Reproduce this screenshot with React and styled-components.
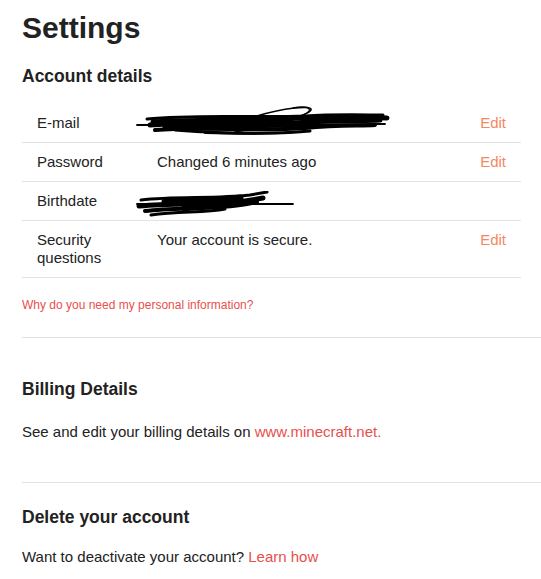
import styled, { createGlobalStyle } from 'styled-components';

const GlobalStyle = createGlobalStyle`
  body {
    margin: 0;
    background: #fff;
    font-family: 'Liberation Sans', Arial, sans-serif;
    color: #222;
  }
`;

const rows = [
  { label: 'E-mail', value: 'email', edit: true },
  { label: 'Password', value: 'Changed 6 minutes ago', edit: true },
  { label: 'Birthdate', value: 'birthdate', edit: false },
  { label: 'Security questions', value: 'Your account is secure.', edit: true },
];

// scribbles hiding the personal data
const EmailScribble = () => (
  <svg width="256" height="32" viewBox="0 0 256 32">
    <g fill="none" stroke="#000" strokeLinecap="round">
      <path d="M2 20 L250 19" strokeWidth="1.8" />
      <path d="M12 14 C60 9 120 13 170 11 C200 9 230 10 248 10" strokeWidth="3" />
      <path d="M15 20 C60 16 110 22 160 18 C200 15 230 16 245 15" strokeWidth="5" />
      <path d="M20 25 C70 21 120 27 170 23 C205 20 225 21 240 20" strokeWidth="4" />
      <path d="M18 17 C60 13 100 18 150 14 C190 11 225 12 252 13" strokeWidth="5" />
      <path d="M30 22 C80 19 130 22 180 19" strokeWidth="5" />
      <path d="M100 27 C135 21 172 11 176 5 C178 0 150 2 115 13 C105 17 98 21 92 24" strokeWidth="1.5" />
      <path d="M158 3 C168 1 176 2 174 6 C170 12 138 19 118 23" strokeWidth="1.3" />
      <path d="M40 25 C80 28 130 30 175 26" strokeWidth="3" />
      <path d="M70 28 C100 29 140 29 160 27" strokeWidth="2" />
    </g>
  </svg>
);

const BirthScribble = () => (
  <svg width="162" height="28" viewBox="0 0 162 28">
    <g fill="none" stroke="#000" strokeLinecap="round">
      <path d="M2 13 L158 13" strokeWidth="1.8" />
      <path d="M6 9 C40 5 80 8 115 4 L132 1" strokeWidth="3" />
      <path d="M4 15 C40 11 80 15 110 10 L128 7" strokeWidth="5" />
      <path d="M10 20 C40 16 80 19 112 13 L122 11" strokeWidth="4" />
      <path d="M16 24 C45 20 70 22 90 18" strokeWidth="3" />
      <path d="M30 11 C60 8 80 11 105 7" strokeWidth="7" />
      <path d="M50 17 C70 13 85 15 100 11" strokeWidth="7" />
    </g>
  </svg>
);

const App = () => {
  return (
    <Page>
      <GlobalStyle />
      <Title>Settings</Title>
      <SectionTitle $top={19}>Account details</SectionTitle>
      <Table>
        <tbody>
          {rows.map((row) => (
            <Row key={row.label}>
              <LabelCell>{row.label}</LabelCell>
              <ValueCell>
                {row.value === 'email' && (
                  <Redacted $shift={-9}>
                    <EmailScribble />
                  </Redacted>
                )}
                {row.value === 'birthdate' && (
                  <Redacted $shift={-1}>
                    <BirthScribble />
                  </Redacted>
                )}
                {row.value !== 'email' && row.value !== 'birthdate' && row.value}
              </ValueCell>
              <EditCell>{row.edit && <EditLink href="#">Edit</EditLink>}</EditCell>
            </Row>
          ))}
        </tbody>
      </Table>
      <SmallLink href="#">Why do you need my personal information?</SmallLink>
      <Divider $top={25} />
      <SectionTitle $top={40}>Billing Details</SectionTitle>
      <Text $top={23}>
        See and edit your billing details on <TextLink href="#">www.minecraft.net.</TextLink>
      </Text>
      <Divider $top={41} />
      <SectionTitle $top={23}>Delete your account</SectionTitle>
      <Text $top={20}>
        Want to deactivate your account? <TextLink href="#">Learn how</TextLink>
      </Text>
    </Page>
  );
};

const Page = styled.div`
  padding: 0 0 0 22px;
`;

const Title = styled.h1`
  margin: 0;
  padding-top: 10px;
  font-size: 30px;
  line-height: 36px;
  font-weight: bold;
  color: #222;
`;

const SectionTitle = styled.h2`
  margin: ${(p) => p.$top}px 0 0;
  font-size: 17.5px;
  line-height: 22px;
  font-weight: bold;
  color: #222;
`;

const Table = styled.table`
  width: 499px;
  margin-top: 17px;
  border-collapse: collapse;
  font-size: 15px;
  line-height: 18px;
`;

const Row = styled.tr`
  border-bottom: 1px solid #e3e3e3;
  td {
    padding: 10px 15px;
    vertical-align: top;
  }
`;

const LabelCell = styled.td`
  width: 90px;
  color: #222;
`;

const ValueCell = styled.td`
  color: #222;
`;

const Redacted = styled.span`
  position: relative;
  display: block;
  height: 18px;
  svg {
    position: absolute;
    left: -22px;
    top: ${(p) => p.$shift}px;
  }
`;

const EditCell = styled.td`
  text-align: right;
  width: 40px;
`;

const EditLink = styled.a`
  color: #f5875f;
  text-decoration: none;
`;

const SmallLink = styled.a`
  display: block;
  margin-top: 20px;
  font-size: 12px;
  line-height: 14px;
  color: #e8504c;
  text-decoration: none;
`;

const Divider = styled.hr`
  margin: ${(p) => p.$top}px 0 0;
  border: 0;
  border-top: 1px solid #e3e3e3;
`;

const Text = styled.p`
  margin: ${(p) => p.$top}px 0 0;
  font-size: 15px;
  line-height: 18px;
  color: #222;
`;

const TextLink = styled.a`
  color: #e8504c;
  text-decoration: none;
`;

export default App;
